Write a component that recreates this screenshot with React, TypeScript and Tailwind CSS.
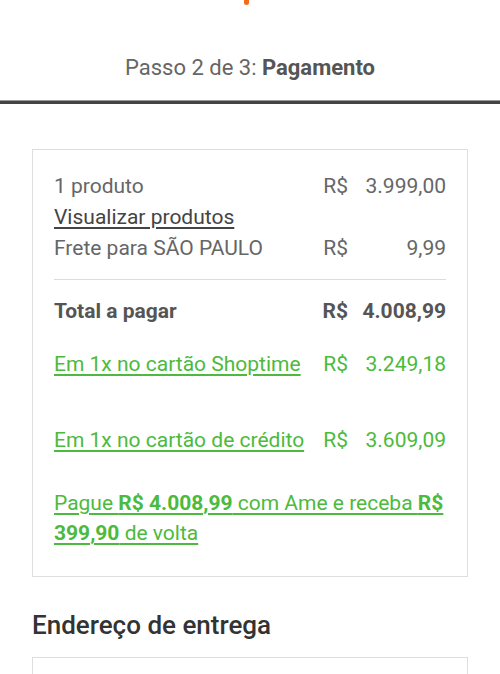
export default function App() {
  return (
    <div className="relative w-[500px] h-[674px] overflow-hidden bg-white font-['Roboto',sans-serif]">
      {/* logo tail peeking in at the top */}
      <div className="absolute left-[244px] top-0 w-[5px] h-[5px] rounded-b-sm bg-[#f26b1d]" />

      <div className="pt-[53px] h-[100px] text-center text-[22px] leading-[30px] text-[#666]">
        Passo 2 de 3: <span className="font-bold text-[#555]">Pagamento</span>
      </div>
      <div className="h-[1px] bg-[#9a9a9a]" />
      <div className="h-[3px] bg-[#444]" />

      <div className="mx-[32px] mt-[45px] border-[1.5px] border-[#dedede] px-[21px] pt-[21px] pb-[28px] text-[21px] leading-[31px] text-[#666]">
        <div className="grid grid-cols-[1fr_auto_98px]">
          <span>1 produto</span>
          <span>R$</span>
          <span className="text-right">3.999,00</span>
          <span className="col-span-3 underline underline-offset-[3px] text-[#444]">Visualizar produtos</span>
          <span>Frete para SÃO PAULO</span>
          <span>R$</span>
          <span className="text-right">9,99</span>
        </div>

        <div className="h-[1px] bg-[#dcdcdc] mt-[15px] mb-[16px]" />

        <div className="grid grid-cols-[1fr_auto_98px] font-bold text-[#555]">
          <span>Total a pagar</span>
          <span>R$</span>
          <span className="text-right">4.008,99</span>
        </div>

        <div className="grid grid-cols-[1fr_auto_98px] mt-[22px] text-[#4cba3c]">
          <span className="underline underline-offset-[3px]">Em 1x no cartão Shoptime</span>
          <span>R$</span>
          <span className="text-right">3.249,18</span>
        </div>

        <div className="grid grid-cols-[1fr_auto_98px] mt-[45px] text-[#4cba3c]">
          <span className="underline underline-offset-[3px]">Em 1x no cartão de crédito</span>
          <span>R$</span>
          <span className="text-right">3.609,09</span>
        </div>

        <p className="mt-[32px] leading-[30px] text-[#4cba3c] underline underline-offset-[3px]">
          Pague <b>R$ 4.008,99</b> com Ame e receba <b>R$ 399,90</b> de volta
        </p>
      </div>

      <h2 className="mx-[32px] mt-[33px] text-[26px] leading-[30px] font-medium text-[#333]">
        Endereço de entrega
      </h2>
      <div className="mx-[32px] mt-[17px] h-[60px] border-[1.5px] border-[#dedede]" />
    </div>
  );
}
